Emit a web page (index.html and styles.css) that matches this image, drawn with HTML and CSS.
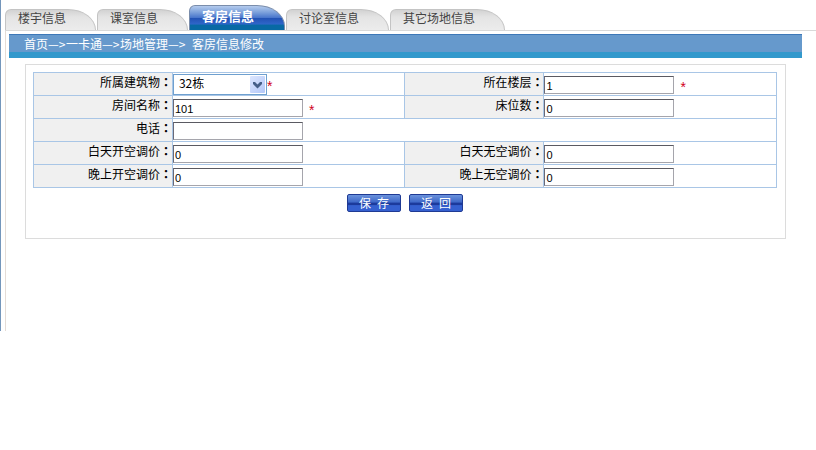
FILE: index.html
```html
<!DOCTYPE html>
<html lang="zh-CN">
<head>
<meta charset="utf-8">
<title>客房信息修改</title>
<link rel="stylesheet" href="styles.css">
</head>
<body>
<div class="frame">
  <nav class="tabs">
    <a class="tab" href="#">楼宇信息</a>
    <a class="tab" href="#">课室信息</a>
    <a class="tab tab-active" href="#">客房信息</a>
    <a class="tab" href="#">讨论室信息</a>
    <a class="tab" href="#">其它场地信息</a>
  </nav>
  <main class="content">
    <div class="crumbs">首页<span class="sep">—&gt;</span>一卡通<span class="sep">—&gt;</span>场地管理<span class="sep sep-last">—&gt;</span>客房信息修改</div>
    <form class="panel">
      <table class="fields">
        <colgroup><col class="col-label"><col class="col-value"><col class="col-label"><col class="col-value"></colgroup>
        <tr>
          <th><label for="building">所属建筑物<span class="colon" lang="zh-TW">：</span></label></th>
          <td><div class="cell cell-select">
            <div class="select-box">
              <select id="building"><option>32栋</option></select>
              <svg class="arrow" viewBox="0 0 15 17" aria-hidden="true">
                <defs><linearGradient id="face" x1="0" y1="0" x2="1" y2="1"><stop offset="0" stop-color="#dce6fe"/><stop offset="1" stop-color="#b3c7f8"/></linearGradient></defs>
                <rect width="15" height="17" rx="1" fill="url(#face)"/>
                <path d="M3 6h2l2.500 2.500L10 6h2v2l-4.500 4.500L3 8z" fill="#465f88"/>
              </svg>
            </div><span class="required">*</span></div></td>
          <th><label for="floor">所在楼层<span class="colon" lang="zh-TW">：</span></label></th>
          <td><div class="cell"><input id="floor" type="text" value="1"><span class="required required-apart">*</span></div></td>
        </tr>
        <tr>
          <th><label for="room">房间名称<span class="colon" lang="zh-TW">：</span></label></th>
          <td><div class="cell"><input id="room" type="text" value="101"><span class="required required-apart">*</span></div></td>
          <th><label for="beds">床位数<span class="colon" lang="zh-TW">：</span></label></th>
          <td><div class="cell"><input id="beds" type="text" value="0"></div></td>
        </tr>
        <tr>
          <th><label for="phone">电话<span class="colon" lang="zh-TW">：</span></label></th>
          <td colspan="3"><div class="cell"><input id="phone" type="text" value=""></div></td>
        </tr>
        <tr>
          <th><label for="day-on">白天开空调价<span class="colon" lang="zh-TW">：</span></label></th>
          <td><div class="cell"><input id="day-on" type="text" value="0"></div></td>
          <th><label for="day-off">白天无空调价<span class="colon" lang="zh-TW">：</span></label></th>
          <td><div class="cell"><input id="day-off" type="text" value="0"></div></td>
        </tr>
        <tr>
          <th><label for="night-on">晚上开空调价<span class="colon" lang="zh-TW">：</span></label></th>
          <td><div class="cell"><input id="night-on" type="text" value="0"></div></td>
          <th><label for="night-off">晚上无空调价<span class="colon" lang="zh-TW">：</span></label></th>
          <td><div class="cell"><input id="night-off" type="text" value="0"></div></td>
        </tr>
      </table>
      <div class="actions">
        <button type="button"><span>保</span><span>存</span></button>
        <button type="button"><span>返</span><span>回</span></button>
      </div>
    </form>
  </main>
</div>
</body>
</html>
```
FILE: styles.css
```css
* {
  box-sizing: border-box;
}

body {
  margin: 0;
  background: #fff;
  color: #000;
  font: 12px/16px "Noto Sans CJK SC", sans-serif;
}

.frame {
  padding-left: 4px;
  border-left: 1px solid #7496bb;
}

/* Tab strip */
.tabs {
  display: flex;
  align-items: flex-end;
  gap: 1px;
  padding-top: 5px;
  border-bottom: 1px solid #d9d9d9;
}

.tab {
  height: 21px;
  padding: 0 29px 0 12px;
  border: 1px solid #c4c4c4;
  border-bottom: 0;
  border-radius: 6px 28px 0 0 / 6px 21px 0 0;
  background: linear-gradient(#d2d2d2, #e4e4e4 35%, #ececec);
  color: #444;
  line-height: 15px;
  text-decoration: none;
}

.tab-active {
  height: 25px;
  padding: 2px 30px 0 12px;
  border-color: #7a8dab;
  background: linear-gradient(#b4cbed, #7fa3dc 25%, #4a77cc 48%, #2353b5 52%, #2f66c9 75%, #0869a4 80%, #0869a4);
  color: #fff;
  font-size: 13px;
  font-weight: bold;
}

/* Page body */
.content {
  padding: 3px 14px 92px 3px;
  border-left: 1px solid #e4dcd6;
}

.crumbs {
  height: 24px;
  padding: 1px 15px;
  border-top: 1px solid #3d78b8;
  background: linear-gradient(#69c 17px, #39c 17px);
  color: #fff;
}

.sep {
  display: inline-block;
  width: 18px;
  white-space: nowrap;
}

.sep-last {
  width: 24px;
}

.panel {
  margin: 6px 16px 0;
  padding: 7px 8px 26px 7px;
  border: 1px solid #dcdcdc;
}

/* Field table */
.fields {
  width: 100%;
  table-layout: fixed;
  border-collapse: collapse;
}

.col-label {
  width: 18.7%;
}

.col-value {
  width: 31.3%;
}

.fields th,
.fields td {
  height: 23px;
  padding: 0;
  border: 1px solid #a9c6e6;
}

.fields th {
  padding: 0 0 4px;
  background: #f0f0f0;
  font-weight: normal;
  text-align: right;
}

.colon {
  font-family: "Noto Sans CJK TC", sans-serif;
  font-weight: bold;
}

.cell {
  display: flex;
  align-items: center;
  height: 22px;
  padding-top: 1px;
}

.cell-select {
  padding-top: 0;
}

input {
  width: 130px;
  height: 18px;
  padding: 2px 1px 0;
  border: 1px solid #a5a5ac;
  border-top-color: #5a5a62;
  border-left-color: #6a6a78;
  background: #fff;
  color: #000;
  font: 11px/14px "Liberation Sans", sans-serif;
}

.select-box {
  position: relative;
  width: 94px;
}

select {
  display: block;
  width: 100%;
  height: 21px;
  padding: 0 18px 2px 5px;
  border: 1px solid #6fa0cf;
  border-radius: 0;
  background: #fff;
  color: #000;
  font: 12px/16px "Noto Sans CJK SC", sans-serif;
  appearance: none;
}

.arrow {
  position: absolute;
  top: 2px;
  right: 2px;
  width: 15px;
  height: 17px;
  pointer-events: none;
}

.required {
  padding-top: 4px;
  color: #d00020;
  font: 14px/16px "Liberation Sans", sans-serif;
}

.required-apart {
  margin-left: 6px;
}

/* Buttons */
.actions {
  display: flex;
  justify-content: center;
  gap: 8px;
  margin-top: 6px;
}

button {
  display: flex;
  justify-content: center;
  align-items: center;
  gap: 6px;
  width: 54px;
  height: 18px;
  padding: 0 0 1px;
  border: 1px solid #1f3a94;
  border-radius: 2px;
  background: linear-gradient(#6a92dc, #3f68c8 45%, #1c3a9c 50%, #1c3a9c 62%, #3560d0 66%, #3560d0);
  color: #fff;
  font: 12px/16px "Noto Sans CJK SC", sans-serif;
}
```
